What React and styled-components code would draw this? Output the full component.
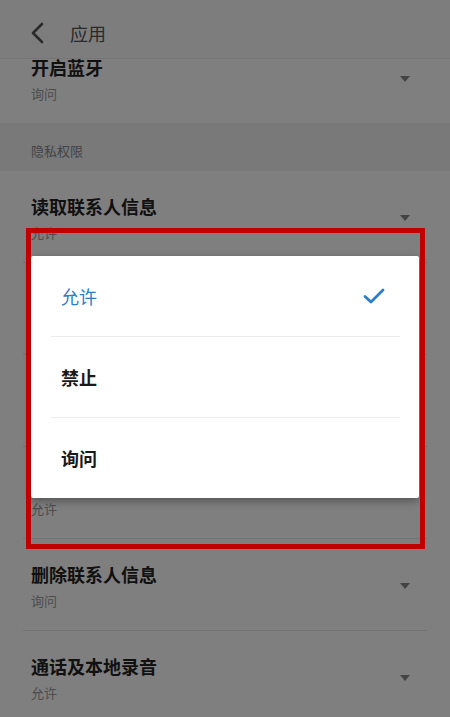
import React from "react";
import styled, { createGlobalStyle } from "styled-components";

const GlobalStyle = createGlobalStyle`
    html, body {
        margin: 0;
        padding: 0;
        background: #ffffff;
    }
    body {
        font-family: "Noto Sans CJK SC", "Noto Sans", sans-serif;
    }
`;

const Page = styled.div`
    position: relative;
    width: 450px;
    height: 717px;
    overflow: hidden;
    background: #ffffff;
`;

const Header = styled.header`
    position: relative;
    z-index: 1;
    display: flex;
    align-items: center;
    gap: 22px;
    height: 50px;
    padding: 8px 0 0 26px;
    background: #fbfbfb;
    border-bottom: 1px solid #ececec;
`;

const BackButton = styled.div`
    display: flex;
    align-items: center;
    justify-content: center;
    width: 22px;
    height: 24px;
`;

const HeaderTitle = styled.h1`
    margin: 0;
    font-size: 18px;
    font-weight: 400;
    color: #555555;
`;

const List = styled.div`
    margin-top: -27px;
`;

const Row = styled.div`
    display: flex;
    align-items: center;
    margin: 0 23px;
    padding: 23px 17px 20px 8px;
    border-bottom: ${(props) => (props.last ? "none" : "1px solid #e6e6e6")};
`;

const RowText = styled.div`
    flex: 1;
    display: flex;
    flex-direction: column;
    gap: 6px;
`;

const RowTitle = styled.div`
    font-size: 18px;
    line-height: 24px;
    font-weight: 700;
    color: #222222;
`;

const RowValue = styled.div`
    font-size: 13px;
    line-height: 18px;
    color: #999999;
`;

const Caret = styled.div`
    width: 0;
    height: 0;
    border-left: 5px solid transparent;
    border-right: 5px solid transparent;
    border-top: 6px solid #888888;
`;

const Section = styled.div`
    display: flex;
    align-items: center;
    height: 48px;
    padding: 6px 31px 0;
    box-sizing: border-box;
    background: #f2f2f2;
    font-size: 13px;
    color: #888888;
`;

const Dim = styled.div`
    position: absolute;
    inset: 0;
    z-index: 2;
    background: rgba(0, 0, 0, 0.5);
`;

const Dialog = styled.div`
    position: absolute;
    z-index: 3;
    left: 31px;
    top: 256px;
    width: 388px;
    background: #ffffff;
    border-radius: 2px;
    box-shadow: 0 3px 8px rgba(0, 0, 0, 0.35);
    display: flex;
    flex-direction: column;
`;

const Option = styled.div`
    display: flex;
    align-items: center;
    justify-content: space-between;
    height: 80px;
    margin: 0 19px 0 20px;
    padding: 0 15px 0 10px;
    border-bottom: ${(props) => (props.last ? "none" : "1px solid #ececec")};
    font-size: 18px;
    font-weight: ${(props) => (props.selected ? 400 : 700)};
    color: ${(props) => (props.selected ? "#2a7dc9" : "#1a1a1a")};
`;

const Annotation = styled.div`
    position: absolute;
    z-index: 4;
    left: 26px;
    top: 228px;
    width: 389px;
    height: 311px;
    border: 5px solid #c00000;
    pointer-events: none;
`;

const rowsTop = [{ title: "开启蓝牙", value: "询问" }];

const rowsPrivacy = [
    { title: "读取联系人信息", value: "允许" },
    { title: "新建联系人", value: "允许" },
    { title: "修改联系人信息", value: "允许" },
    { title: "读取通话记录", value: "允许" },
    { title: "删除联系人信息", value: "询问" },
    { title: "通话及本地录音", value: "允许" },
];

const options = [
    { label: "允许", selected: true },
    { label: "禁止" },
    { label: "询问" },
];

const SettingRow = ({ title, value, last }) => (
    <Row last={last}>
        <RowText>
            <RowTitle>{title}</RowTitle>
            <RowValue>{value}</RowValue>
        </RowText>
        <Caret />
    </Row>
);

const App = () => {
    return (
        <Page>
            <GlobalStyle />
            <Header>
                <BackButton>
                    <svg width="14" height="22" viewBox="0 0 14 22">
                        <path d="M12 2 L3 11 L12 20" fill="none" stroke="#555555" strokeWidth="2.6" strokeLinecap="round" strokeLinejoin="round" />
                    </svg>
                </BackButton>
                <HeaderTitle>应用</HeaderTitle>
            </Header>
            <List>
                {rowsTop.map((r) => (
                    <SettingRow key={r.title} {...r} last />
                ))}
                <Section>隐私权限</Section>
                {rowsPrivacy.map((r) => (
                    <SettingRow key={r.title} {...r} />
                ))}
            </List>
            <Dim />
            <Dialog>
                {options.map((o, i) => (
                    <Option key={o.label} selected={o.selected} last={i === options.length - 1}>
                        {o.label}
                        {o.selected && (
                            <svg width="22" height="16" viewBox="0 0 22 16">
                                <path d="M2 8.5 L8 14 L20 2" fill="none" stroke="#2a7dc9" strokeWidth="2.8" strokeLinecap="round" strokeLinejoin="round" />
                            </svg>
                        )}
                    </Option>
                ))}
            </Dialog>
            <Annotation />
        </Page>
    );
};

export default App;
